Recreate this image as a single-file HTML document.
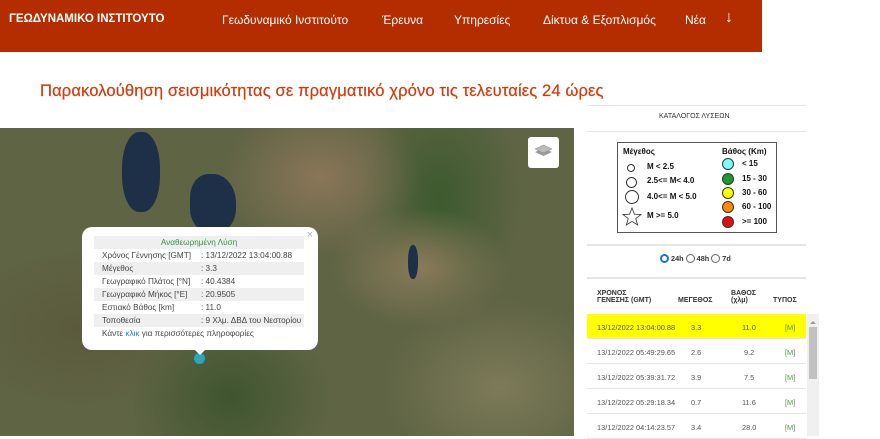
<!DOCTYPE html>
<html><head><meta charset="utf-8"><style>
*{margin:0;padding:0;box-sizing:border-box}
body{width:880px;height:436px;overflow:hidden;background:#fff;font-family:"Liberation Sans",sans-serif;position:relative}
.hdr{position:absolute;left:0;top:0;width:762px;height:52px;background:#b32d00;color:#fff;font-size:12px}
.hdr span{position:absolute;top:13px}
h1{position:absolute;left:40px;top:81px;font-size:16.6px;font-weight:normal;color:#d23a0c;letter-spacing:.1px;-webkit-text-stroke:.2px #d23a0c}
.map{position:absolute;left:0;top:128px;width:574px;height:308px;overflow:hidden;
background:radial-gradient(ellipse 90px 60px at 420px 140px,#8a7a5a,transparent),
radial-gradient(ellipse 120px 90px at 500px 260px,#7d7a58,transparent),
radial-gradient(ellipse 100px 80px at 320px 50px,#8a7658,transparent),
radial-gradient(ellipse 80px 120px at 440px 70px,#3d5a2e,transparent),
radial-gradient(ellipse 120px 80px at 80px 200px,#5c5a3c,transparent),
radial-gradient(ellipse 100px 90px at 230px 270px,#3f5530,transparent),
#5e6444}
.lake{position:absolute;background:#1e3048;border-radius:45%}
.pop{position:absolute;left:82px;top:227px;width:236px;height:123px;background:#fff;border-radius:10px;font-size:8.2px;color:#444}
.pop .r{position:absolute;left:12px;width:210px;height:13px;line-height:13px}
.pop .g{background:#efefef}
.pop .r b{font-weight:normal;position:absolute;left:107px}
.pop .r i{font-style:normal;position:absolute;left:8px}
.panel{position:absolute;left:587px;width:219px;height:2px;background:#e3e5ea}
.t{position:absolute;font-size:7.6px;color:#333}
.row{position:absolute;left:587px;width:219px;height:25px;border-bottom:1px solid #e6e6e6;font-size:7.4px;color:#555}
.row span{position:absolute;top:9px}
.dot{position:absolute;width:12px;height:12px;border-radius:50%;border:1px solid #333}
.oc{position:absolute;border:1px solid #333;border-radius:50%;background:#fff}
.lg span{font-size:8px}
</style></head><body>
<div class="hdr">
<span style="left:9px;font-weight:bold;font-size:11.5px">ΓΕΩΔΥΝΑΜΙΚΟ ΙΝΣΤΙΤΟΥΤΟ</span>
<span style="left:222px">Γεωδυναμικό Ινστιτούτο</span>
<span style="left:382px">Έρευνα</span>
<span style="left:454px">Υπηρεσίες</span>
<span style="left:543px">Δίκτυα &amp; Εξοπλισμός</span>
<span style="left:685px">Νέα</span>
<span style="left:725px;top:9px;font-size:16px">↓</span>
</div>
<h1>Παρακολούθηση σεισμικότητας σε πραγματικό χρόνο τις τελευταίες 24 ώρες</h1>
<div class="map">
<div class="lake" style="left:122px;top:4px;width:38px;height:80px"></div>
<div class="lake" style="left:190px;top:46px;width:46px;height:58px;border-radius:40% 50% 40% 40%"></div>
<div class="lake" style="left:408px;top:117px;width:10px;height:34px"></div>
<div style="position:absolute;left:528px;top:9px;width:31px;height:31px;background:#fff;border-radius:3px"></div>
<svg style="position:absolute;left:533px;top:14px" width="21" height="21" viewBox="0 0 21 21"><path d="M10.5 14 2 10l8.5-4 8.5 4z" fill="#999"/><path d="M10.5 11 2 7l8.5-4 8.5 4z" fill="#bbb" stroke="#888" stroke-width=".5"/></svg>
<div style="position:absolute;left:194px;top:225px;width:11px;height:11px;border-radius:50%;background:#2aa7c0"></div>
</div>
<div class="pop">
<div style="position:absolute;left:112px;top:122px;width:0;height:0;border:6px solid transparent;border-top-color:#fff"></div>
<div style="position:absolute;right:5px;top:2px;color:#aaa;font-size:11px">×</div>
<div class="r g" style="top:9px;text-align:center;color:#2a9a3a">Αναθεωρημένη Λύση</div>
<div class="r" style="top:22px"><i>Χρόνος Γέννησης [GMT]</i><b>: 13/12/2022 13:04:00.88</b></div>
<div class="r g" style="top:35px"><i>Μέγεθος</i><b>: 3.3</b></div>
<div class="r" style="top:48px"><i>Γεωγραφικό Πλάτος [°N]</i><b>: 40.4384</b></div>
<div class="r g" style="top:61px"><i>Γεωγραφικό Μήκος [°E]</i><b>: 20.9505</b></div>
<div class="r" style="top:74px"><i>Εστιακό Βάθος [km]</i><b>: 11.0</b></div>
<div class="r g" style="top:87px"><i>Τοποθεσία</i><b>: 9 Χλμ. ΔΒΔ του Νεστορίου</b></div>
<div class="r" style="top:100px"><i>Κάντε <span style="color:#1b86b8">κλικ</span> για περισσότερες πληροφορίες</i></div>
</div>
<div class="panel" style="top:105px;height:1px"></div>
<div class="t" style="left:659px;top:113px;font-size:7px">ΚΑΤΑΛΟΓΟΣ ΛΥΣΕΩΝ</div>
<div class="panel" style="top:131px;height:1px"></div>
<div class="lg" style="position:absolute;left:617px;top:142px;width:160px;height:91px;border:1px solid #555;font-size:7.3px;color:#111;font-weight:bold">
<span style="position:absolute;left:5px;top:4px">Μέγεθος</span>
<span style="position:absolute;left:104px;top:4px">Βάθος (Km)</span>
<div class="oc" style="left:9px;top:21px;width:8px;height:8px"></div><span style="position:absolute;left:29px;top:19px">M &lt; 2.5</span>
<div class="oc" style="left:8px;top:34px;width:11px;height:11px"></div><span style="position:absolute;left:29px;top:33px">2.5&lt;= M&lt; 4.0</span>
<div class="oc" style="left:7px;top:47px;width:14px;height:14px"></div><span style="position:absolute;left:29px;top:49px">4.0&lt;= M &lt; 5.0</span>
<svg style="position:absolute;left:4px;top:64px" width="20" height="20" viewBox="0 0 20 20"><path d="M10 1l2.4 6.2 6.6.3-5.2 4.1 1.8 6.4L10 14.3 4.4 18l1.8-6.4L1 7.5l6.6-.3z" fill="#fff" stroke="#333" stroke-width=".8"/></svg><span style="position:absolute;left:29px;top:68px">M &gt;= 5.0</span>
<div class="dot" style="left:104px;top:15px;background:#7ff"></div><span style="position:absolute;left:124px;top:16px">&lt; 15</span>
<div class="dot" style="left:104px;top:30px;background:#1a9a30"></div><span style="position:absolute;left:124px;top:31px">15 - 30</span>
<div class="dot" style="left:104px;top:44px;background:#ff0"></div><span style="position:absolute;left:124px;top:45px">30 - 60</span>
<div class="dot" style="left:104px;top:58px;background:#f80"></div><span style="position:absolute;left:124px;top:59px">60 - 100</span>
<div class="dot" style="left:104px;top:73px;background:#e01010"></div><span style="position:absolute;left:124px;top:74px">&gt;= 100</span>
</div>
<div class="panel" style="top:244px"></div>
<div class="t" style="left:660px;top:254px;font-weight:bold;font-size:7.3px"><span style="display:inline-block;width:9px;height:9px;border-radius:50%;border:2.5px solid #1a73e8;vertical-align:-2px"></span> 24h <span style="display:inline-block;width:9px;height:9px;border-radius:50%;border:1px solid #666;vertical-align:-2px"></span> 48h <span style="display:inline-block;width:9px;height:9px;border-radius:50%;border:1px solid #666;vertical-align:-2px"></span> 7d</div>
<div class="panel" style="top:277px"></div>
<div class="t" style="left:597px;top:290px;font-weight:bold;font-size:7px;line-height:7px">ΧΡΟΝΟΣ<br>ΓΕΝΕΣΗΣ (GMT)</div>
<div class="t" style="left:678px;top:297px;font-weight:bold;font-size:7px">ΜΕΓΕΘΟΣ</div>
<div class="t" style="left:731px;top:290px;font-weight:bold;font-size:7px;line-height:7px">ΒΑΘΟΣ<br>(χλμ)</div>
<div class="t" style="left:773px;top:297px;font-weight:bold;font-size:7px">ΤΥΠΟΣ</div>
<div class="row" style="top:314px;background:#ff0"><span style="left:10px">13/12/2022 13:04:00.88</span><span style="left:104px">3.3</span><span style="left:155px">11.0</span><span style="left:198px;color:#4a9a4a">[M]</span></div>
<div class="row" style="top:339px"><span style="left:10px">13/12/2022 05:49:29.65</span><span style="left:104px">2.6</span><span style="left:157px">9.2</span><span style="left:198px;color:#4a9a4a">[M]</span></div>
<div class="row" style="top:364px"><span style="left:10px">13/12/2022 05:39:31.72</span><span style="left:104px">3.9</span><span style="left:157px">7.5</span><span style="left:198px;color:#4a9a4a">[M]</span></div>
<div class="row" style="top:389px"><span style="left:10px">13/12/2022 05:29:18.34</span><span style="left:104px">0.7</span><span style="left:155px">11.6</span><span style="left:198px;color:#4a9a4a">[M]</span></div>
<div class="row" style="top:414px"><span style="left:10px">13/12/2022 04:14:23.57</span><span style="left:104px">3.4</span><span style="left:155px">28.0</span><span style="left:198px;color:#4a9a4a">[M]</span></div>
<div style="position:absolute;left:807px;top:314px;width:12px;height:122px;background:#f0f0f0"></div>
<div style="position:absolute;left:809px;top:327px;width:8px;height:52px;background:#c1c1c1"></div>
<div style="position:absolute;left:810px;top:318px;border:3px solid transparent;border-bottom:3px solid #999"></div>
</body></html>
